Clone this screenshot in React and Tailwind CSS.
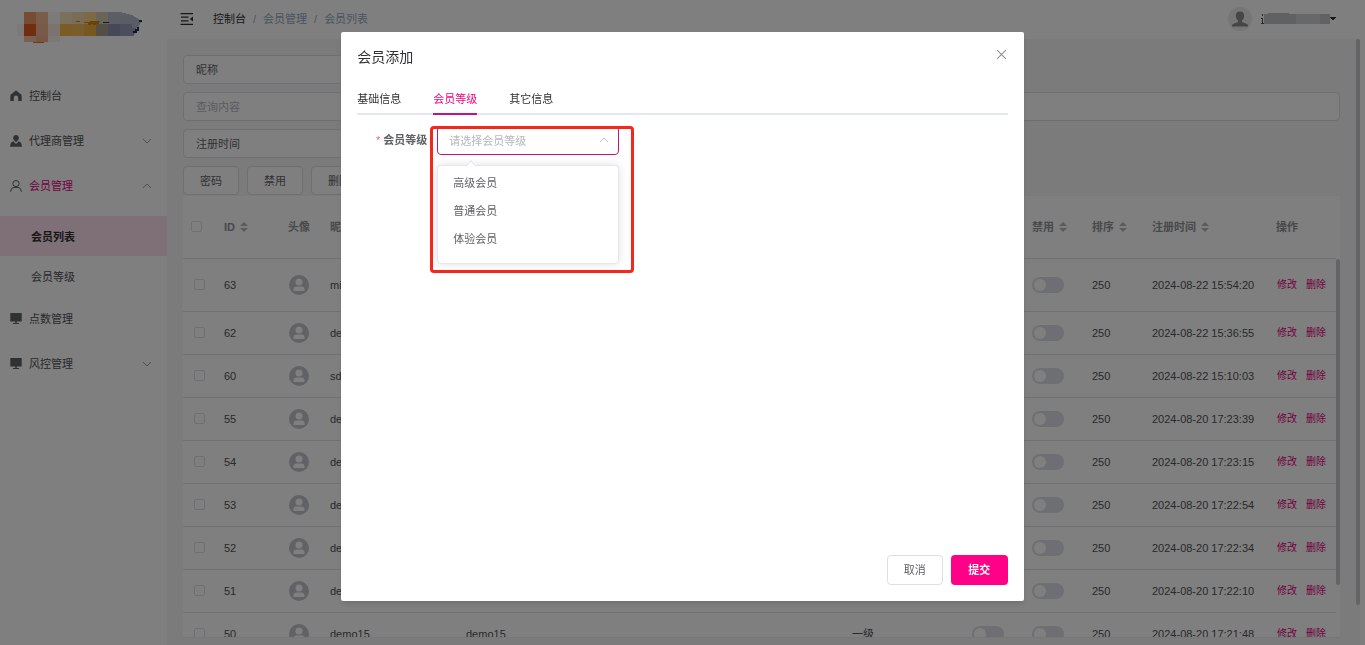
import { useState } from "react";

const menu = [
  { label: "控制台", icon: "home" },
  { label: "代理商管理", icon: "agent", arrow: "down" },
  { label: "会员管理", icon: "user", arrow: "up", active: true, children: ["会员列表", "会员等级"] },
  { label: "点数管理", icon: "monitor" },
  { label: "风控管理", icon: "monitor", arrow: "down" },
];

const members = [
  { id: 63, name: "mini", account: "mini", level: "一级", time: "2024-08-22 15:54:20" },
  { id: 62, name: "demo22", account: "demo22", level: "一级", time: "2024-08-22 15:36:55" },
  { id: 60, name: "sdemo", account: "sdemo", level: "一级", time: "2024-08-22 15:10:03" },
  { id: 55, name: "demo20", account: "demo20", level: "一级", time: "2024-08-20 17:23:39" },
  { id: 54, name: "demo19", account: "demo19", level: "一级", time: "2024-08-20 17:23:15" },
  { id: 53, name: "demo18", account: "demo18", level: "一级", time: "2024-08-20 17:22:54" },
  { id: 52, name: "demo17", account: "demo17", level: "一级", time: "2024-08-20 17:22:34" },
  { id: 51, name: "demo16", account: "demo16", level: "一级", time: "2024-08-20 17:22:10" },
  { id: 50, name: "demo15", account: "demo15", level: "一级", time: "2024-08-20 17:21:48" },
];

const levels = ["高级会员", "普通会员", "体验会员"];
const tabs = ["基础信息", "会员等级", "其它信息"];

function MenuIcon({ name }) {
  return (
    <svg viewBox="0 0 12 12" className="h-3 w-3 shrink-0 text-[#606266]" fill="currentColor" aria-hidden="true">
      {name === "home" && <path d="M6 .5Q5.600.5 5.200.9L.9 4.500Q.3 5 .3 5.700V11h3.500V7.800a2.200 2.200 0 0 1 4.400 0V11h3.500V5.700Q11.700 5 11.100 4.500L6.800.9Q6.400.5 6 .5z" />}
      {name === "agent" && (
        <>
          <path d="M6 0a3 3.100 0 0 1 1.800 5.500L6 7 4.200 5.500A3 3.100 0 0 1 6 0z" />
          <path d="M3.400 6.300 6 9l2.600-2.700c2.200.6 3.200 2.400 3.300 5.400H.1c.1-3 1.100-4.800 3.300-5.400z" />
        </>
      )}
      {name === "user" && (
        <g fill="none" stroke="currentColor" strokeWidth="1">
          <circle cx="6" cy="3.600" r="3.100" />
          <path d="M.7 11.800V11Q.9 7.700 4 7.400h4q3.100.3 3.300 3.600v.8" />
        </g>
      )}
      {name === "monitor" && <path d="M.3 0h11.400v8.500H6.700v1.500H9v1H3v-1h2.300V8.500h-5z" />}
    </svg>
  );
}

function Chevron({ up, className }) {
  return (
    <svg viewBox="0 0 10 10" className={className} fill="none" stroke="currentColor" strokeWidth="0.9" aria-hidden="true">
      <path d={up ? "M1 7l4-4 4 4" : "M1 3l4 4 4-4"} />
    </svg>
  );
}

function Logo() {
  return (
    <svg viewBox="0 0 160 50" className="h-[50px] w-40" shapeRendering="crispEdges" role="img" aria-label="logo">
      <path fill="#f8f4f2" d="M17 24h7v12h-7z" />
      <path fill="#f09868" d="M24 12h12v12H24z" />
      <path fill="#f5b896" d="M36 12h12v12H36z" />
      <path fill="#e25a20" d="M24 24h12v12H24z" />
      <path fill="#f3b494" d="M36 24h12v12H36z" />
      <path fill="#f2c0a4" d="M24 36h12v6H24z" />
      <path fill="#efad8c" d="M36 36h12v6H36z" />
      <path fill="#e06a38" d="M33 42h11v1H33z" />
      <path fill="#fbf6f3" d="M48 12h12v12H48z" />
      <path fill="#f9e6da" d="M48 24h12v12H48z" />
      <path fill="#f7f0ea" d="M48 36h12v6H48z" />
      <path fill="#f6dfba" d="M60 12h12v12H60z" />
      <path fill="#f4dab0" d="M72 12h12v12H72z" />
      <path fill="#f8d48c" d="M84 12h12v12H84z" />
      <path fill="#d0c8b4" d="M96 12h12v12H96z" />
      <path fill="#f4b848" d="M60 24h12v12H60z" />
      <path fill="#f3bb58" d="M72 24h12v12H72z" />
      <path fill="#efb040" d="M84 24h12v12H84z" />
      <path fill="#a89c88" d="M96 24h12v12H96z" />
      <path fill="#b8bacb" d="M108 12h12l12 3 10 6-3 5h-31z" />
      <path fill="#8c90b0" d="M108 24h12v12h-12z" />
      <path fill="#9a9dbb" d="M120 24h18l-4 12h-14z" />
      <path fill="#b5b8cc" d="M120 15l12 1 9 5-3 7h-6v-4h-12z" />
      <path fill="#d08c00" d="M76 21h4v1h-4zM84 22h6v-1h10v1h-1v2h-3v1h-3v-1h-2v1h-3v-2h-4z" />
      <path fill="#28304c" d="M103 22h6v1h-6zM139 20h3v2h-3zM137 27h2v4h-2v2h-4v-2h2v-2h2z" />
    </svg>
  );
}

function Sidebar() {
  return (
    <aside className="w-[167px] shrink-0 bg-white">
      <Logo />
      <nav className="mt-[23px]">
        {menu.map((item) => (
          <div key={item.label}>
            <a href="#" className="flex h-[45px] items-center pl-[10px] pr-[15px]">
              <MenuIcon name={item.icon} />
              <span className={item.active ? "ml-[7px] flex-1 text-[#e6007e]" : "ml-[7px] flex-1 text-[#505256]"}>{item.label}</span>
              {item.arrow && <Chevron up={item.arrow === "up"} className="h-[10px] w-[10px] text-[#909399]" />}
            </a>
            {item.children && (
              <div className="pt-2">
                {item.children.map((child, i) => (
                  <a
                    key={child}
                    href="#"
                    className={
                      i === 0
                        ? "flex h-10 items-center bg-[#ffe0ef] pl-[31px] pt-[2px] font-bold text-[#303133]"
                        : "flex h-10 items-center pl-[31px] pt-[2px] text-[#505256]"
                    }
                  >
                    {child}
                  </a>
                ))}
              </div>
            )}
          </div>
        ))}
      </nav>
    </aside>
  );
}

function Header() {
  return (
    <header className="flex h-[39px] shrink-0 items-center bg-white pb-[2px] pl-[13px] pr-[29px]">
      <button aria-label="收起菜单">
        <svg viewBox="0 0 14 12" className="h-3 w-[14px]" fill="#303133">
          <path d="M.5 0h12.500v1.200H.5zM1 3.600h7.500v1.200H1zM1 7.200h7.500v1.200H1zM.5 10.800h12.500V12H.5zM13 3.500v5L9.800 6z" />
        </svg>
      </button>
      <nav className="ml-[19px] flex gap-[7px]">
        <a href="#" className="text-[#303133]">控制台</a>
        <span className="text-[#a8abb2]">/</span>
        <span className="text-[#97a8be]">会员管理</span>
        <span className="text-[#a8abb2]">/</span>
        <span className="text-[#97a8be]">会员列表</span>
      </nav>
      <button className="ml-auto flex items-center">
        <svg viewBox="0 0 24 24" className="h-6 w-6" aria-hidden="true">
          <circle cx="12" cy="12" r="12" fill="#ececec" />
          <path fill="#8c8c8c" d="M12 4.500c2.600 0 4.200 1.600 4.200 4.200 0 2-.8 3.800-2.200 4.700v1.500l5 2.100c.7.300 1 1 1 2.500H4c0-1.500.3-2.200 1-2.500l5-2.100v-1.500c-1.400-.9-2.200-2.700-2.200-4.700 0-2.600 1.600-4.200 4.200-4.200z" />
        </svg>
        <svg viewBox="0 0 76 12" className="ml-2 h-3 w-[76px]" shapeRendering="crispEdges" aria-hidden="true">
          <path fill="#505256" d="M2 1h1v2H2zM1 5h2v5H2V6H1zM1 10h4v1H1z" />
          <path fill="#c0c2c5" d="M4 1h4V0h21v1h8v10H4z" />
          <path fill="#cfd0d2" d="M36 1h34v10H36z" />
          <path fill="#c4c4c4" d="M60 1h10v10H60z" />
          <path fill="#303133" d="M70 4h6l-3 4z" />
        </svg>
      </button>
    </header>
  );
}

function SortIcon() {
  return (
    <svg viewBox="0 0 8 12" className="ml-[5px] h-3 w-2" fill="#b4b7be" aria-hidden="true">
      <path d="M4 1l4 4H0zM4 11L0 7h8z" />
    </svg>
  );
}

function Th({ children, sort }) {
  return (
    <th className="px-[10px] font-bold text-[#909399]">
      <span className="flex items-center">
        {children}
        {sort && <SortIcon />}
      </span>
    </th>
  );
}

function Check({ label }) {
  return (
    <input
      type="checkbox"
      aria-label={label}
      className="block h-[11px] w-[11px] appearance-none rounded-xs border border-[#dcdfe6] bg-white"
    />
  );
}

function Toggle({ label }) {
  return (
    <input
      type="checkbox"
      role="switch"
      aria-label={label}
      className="block h-4 w-8 appearance-none rounded-full bg-[#dcdfe6] p-[2px] before:block before:h-3 before:w-3 before:rounded-full before:bg-white"
    />
  );
}

function MemberTable() {
  return (
    <div className="flex min-h-0 flex-1 items-start overflow-hidden border-b border-[#ebeef5] bg-white">
      <table className="w-full table-fixed text-left">
        <colgroup>
          <col className="w-[31px]" />
          <col className="w-[64px]" />
          <col className="w-[42px]" />
          <col className="w-[136px]" />
          <col />
          <col className="w-[120px]" />
          <col className="w-[60px]" />
          <col className="w-[60px]" />
          <col className="w-[60px]" />
          <col className="w-[124px]" />
          <col className="w-[70px]" />
        </colgroup>
        <thead>
          <tr className="h-[62px] border-b border-[#dfe2e8]">
            <th className="pl-2"><Check label="全选" /></th>
            <Th sort>ID</Th>
            <th className="px-[10px]">
              <span className="flex justify-center whitespace-nowrap text-[#909399]">头像</span>
            </th>
            <Th>昵称</Th>
            <Th>账号</Th>
            <Th>等级</Th>
            <Th>状态</Th>
            <Th sort>禁用</Th>
            <Th sort>排序</Th>
            <Th sort>注册时间</Th>
            <Th>操作</Th>
          </tr>
        </thead>
        <tbody className="text-[#505256]">
          {members.map((m, i) => (
            <tr key={m.id} className={i === 0 ? "h-[53px] border-b border-[#dfe2e8]" : "h-[43px] border-b border-[#dfe2e8]"}>
              <td className="pl-[11px]"><Check label={`选择 ${m.id}`} /></td>
              <td className="px-[10px]">{m.id}</td>
              <td className="px-[10px]">
                <svg viewBox="0 0 20 20" className="mx-auto h-5 w-5" aria-hidden="true">
                  <circle cx="10" cy="10" r="10" fill="#c0c4cc" />
                  <circle cx="10" cy="7" r="3.500" fill="#fff" />
                  <path fill="#fff" d="M4.500 15.500v-1c0-2 1-3 3-3h5c2 0 3 1 3 3v1q0 .5-.5.5H5q-.5 0-.5-.5z" />
                </svg>
              </td>
              <td className="px-[10px]">{m.name}</td>
              <td className="px-[10px]">{m.account}</td>
              <td className="px-[10px]">{m.level}</td>
              <td className="px-[10px]"><Toggle label={`状态 ${m.id}`} /></td>
              <td className="px-[10px]"><Toggle label={`禁用 ${m.id}`} /></td>
              <td className="px-[10px]">250</td>
              <td className="whitespace-nowrap px-[10px]">{m.time}</td>
              <td className="whitespace-nowrap pl-[11px] text-[10px] text-[#e6007e]">
                <a href="#" className="mr-[9px]">修改</a>
                <a href="#">删除</a>
              </td>
            </tr>
          ))}
        </tbody>
      </table>
      <div className="mt-[63px] h-[326px] w-1 shrink-0 rounded-full bg-[#c8c9cc]" />
    </div>
  );
}

function MemberPage() {
  return (
    <main className="flex min-h-0 flex-1 bg-[#f6f6f6]">
      <div className="flex min-w-0 flex-1 flex-col px-4 pb-[7px] pt-4">
        <div className="mb-px flex flex-col gap-2">
          <select aria-label="查询字段" className="h-[29px] w-48 appearance-none rounded-sm border border-[#dcdfe6] bg-white px-3 text-[#606266]">
            <option>昵称</option>
          </select>
          <input
            aria-label="查询内容"
            placeholder="查询内容"
            className="h-[29px] w-full rounded-sm border border-[#dcdfe6] bg-white px-3 placeholder:text-[#b4b7be]"
          />
          <select aria-label="时间字段" className="h-[29px] w-48 appearance-none rounded-sm border border-[#dcdfe6] bg-white px-3 text-[#606266]">
            <option>注册时间</option>
          </select>
          <div className="flex gap-2">
            {["密码", "禁用", "删除"].map((label) => (
              <button key={label} className="h-[29px] w-14 rounded-sm border border-[#dcdfe6] bg-white text-[#606266]">
                {label}
              </button>
            ))}
          </div>
        </div>
        <MemberTable />
      </div>
      <div className="h-[566px] w-1 shrink-0 rounded-full bg-[#c8c9cc]" />
      <div className="w-[5px] shrink-0 bg-[#fcfcfc]" />
    </main>
  );
}

function LevelSelect() {
  const [level, setLevel] = useState("");

  return (
    <div className="relative ml-[10px] w-[182px]">
      <select
        id="level"
        value={level}
        onChange={(e) => setLevel(e.target.value)}
        className="h-[29px] w-full appearance-none rounded-sm border border-[#c4147c] bg-white px-[11px] text-[#b4b7be]"
      >
        <option value="">请选择会员等级</option>
        {levels.map((l) => (
          <option key={l}>{l}</option>
        ))}
      </select>
      <Chevron up className="pointer-events-none absolute right-[10px] top-[9px] h-[10px] w-[10px] text-[#b4b7be]" />

      <div className="absolute left-0 top-[39px] h-[99px] w-full rounded-sm border border-[#e4e7ed] bg-white pt-[3px] shadow-[0_0_10px_rgba(0,0,0,0.12)]">
        <span className="absolute -top-1 left-[29px] h-2 w-2 rotate-45 border-l border-t border-[#e4e7ed] bg-white" />
        <ul>
          {levels.map((l) => (
            <li key={l}>
              <button type="button" onClick={() => setLevel(l)} className="h-7 w-full px-[15px] text-left text-[#606266]">
                {l}
              </button>
            </li>
          ))}
        </ul>
      </div>
      <div className="pointer-events-none absolute -left-[7px] top-0 h-[147px] w-[204px] rounded-sm border-3 border-[#f5261c]" />
    </div>
  );
}

function AddMemberDialog() {
  return (
    <div className="fixed inset-0 flex items-start justify-center bg-black/50 pt-8">
      <div role="dialog" aria-label="会员添加" className="flex h-[88.2vh] w-1/2 flex-col rounded-xs bg-white p-4 shadow-md">
        <div className="flex h-[18px] items-center justify-between">
          <h2 className="text-sm text-[#303133]">会员添加</h2>
          <button aria-label="关闭" className="mr-px pb-[6px]">
            <svg viewBox="0 0 10 10" className="h-[11px] w-[11px]" stroke="#909399" fill="none">
              <path d="M1 1l8 8M9 1L1 9" />
            </svg>
          </button>
        </div>
        <div role="tablist" className="mt-[18px] flex h-[31px] gap-8 border-b-2 border-[#e4e7ed]">
          {tabs.map((tab, i) => (
            <button
              key={tab}
              role="tab"
              aria-selected={i === 1}
              className={
                i === 1
                  ? "-mb-[2px] h-[31px] border-b-2 border-[#c4147c] text-[#f0047f]"
                  : "-mb-[2px] h-[31px] border-b-2 border-transparent text-[#303133]"
              }
            >
              {tab}
            </button>
          ))}
        </div>
        <form className="mt-[11px] flex flex-1 items-start">
          <label htmlFor="level" className="w-[70px] text-right font-bold leading-[29px] text-[#606266]">
            <span className="mr-[3px] font-normal text-[#f56c6c]">*</span>
            会员等级
          </label>
          <LevelSelect />
        </form>
        <div className="flex justify-end gap-2">
          <button className="h-[30px] w-14 rounded-sm border border-[#dcdfe6] bg-white text-[#606266]">取消</button>
          <button className="h-[30px] w-[57px] rounded-sm bg-[#ff0086] font-bold text-white">提交</button>
        </div>
      </div>
    </div>
  );
}

export default function App() {
  return (
    <div className="flex h-screen overflow-hidden font-['Liberation_Sans','Noto_Sans_CJK_SC',sans-serif] text-[11px] leading-4">
      <Sidebar />
      <div className="flex min-w-0 flex-1 flex-col">
        <Header />
        <MemberPage />
      </div>
      <AddMemberDialog />
    </div>
  );
}
